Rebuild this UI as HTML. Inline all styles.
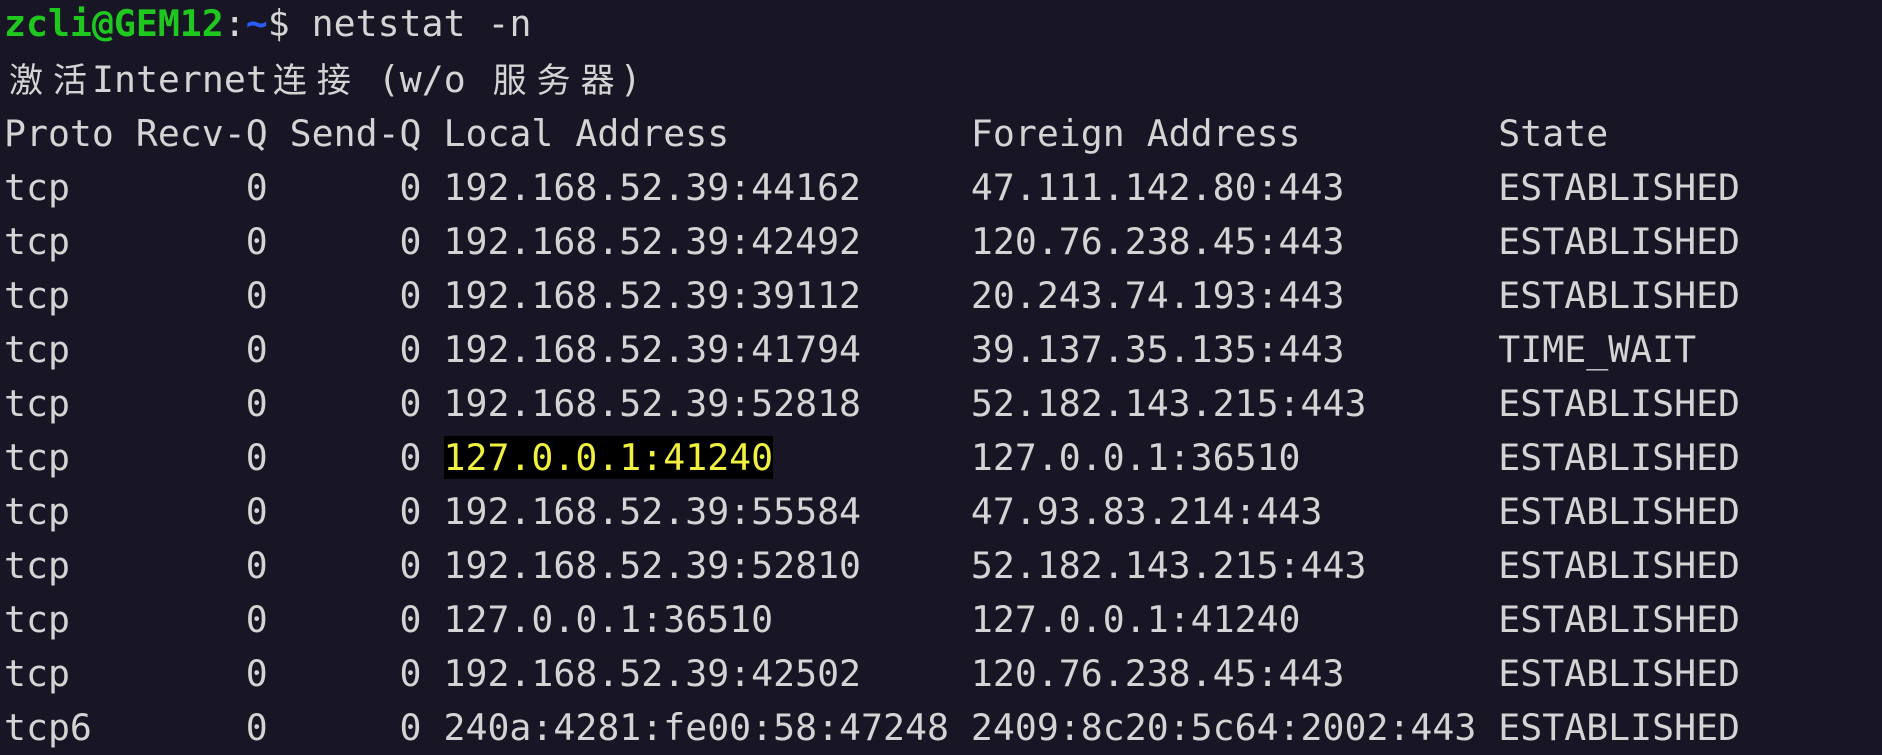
<!DOCTYPE html>
<html><head><meta charset="utf-8"><style>
html,body{margin:0;padding:0;background:#181624;width:1882px;height:754px;overflow:hidden}
pre{margin:0;position:absolute;left:4px;top:-3px;font-family:"DejaVu Sans Mono","Liberation Mono",monospace;font-size:36.5px;line-height:54px;color:#d4d4d4;white-space:pre}
.g{color:#1ec81e;font-weight:bold}.b{color:#2a5cff;font-weight:bold}
.c{display:inline-block;width:44px;text-align:center;font-family:"Noto Sans CJK SC",sans-serif;font-size:34px}
.h{background:#000;color:#f0f040}
</style></head><body><pre><span class="g">zcli@GEM12</span>:<span class="b">~</span>$ netstat -n
<span class="c">激</span><span class="c">活</span>Internet<span class="c">连</span><span class="c">接</span> (w/o <span class="c">服</span><span class="c">务</span><span class="c">器</span>)
Proto Recv-Q Send-Q Local Address           Foreign Address         State
tcp        0      0 192.168.52.39:44162     47.111.142.80:443       ESTABLISHED
tcp        0      0 192.168.52.39:42492     120.76.238.45:443       ESTABLISHED
tcp        0      0 192.168.52.39:39112     20.243.74.193:443       ESTABLISHED
tcp        0      0 192.168.52.39:41794     39.137.35.135:443       TIME_WAIT
tcp        0      0 192.168.52.39:52818     52.182.143.215:443      ESTABLISHED
tcp        0      0 <span class="h">127.0.0.1:41240</span>         127.0.0.1:36510         ESTABLISHED
tcp        0      0 192.168.52.39:55584     47.93.83.214:443        ESTABLISHED
tcp        0      0 192.168.52.39:52810     52.182.143.215:443      ESTABLISHED
tcp        0      0 127.0.0.1:36510         127.0.0.1:41240         ESTABLISHED
tcp        0      0 192.168.52.39:42502     120.76.238.45:443       ESTABLISHED
tcp6       0      0 240a:4281:fe00:58:47248 2409:8c20:5c64:2002:443 ESTABLISHED
</pre></body></html>
